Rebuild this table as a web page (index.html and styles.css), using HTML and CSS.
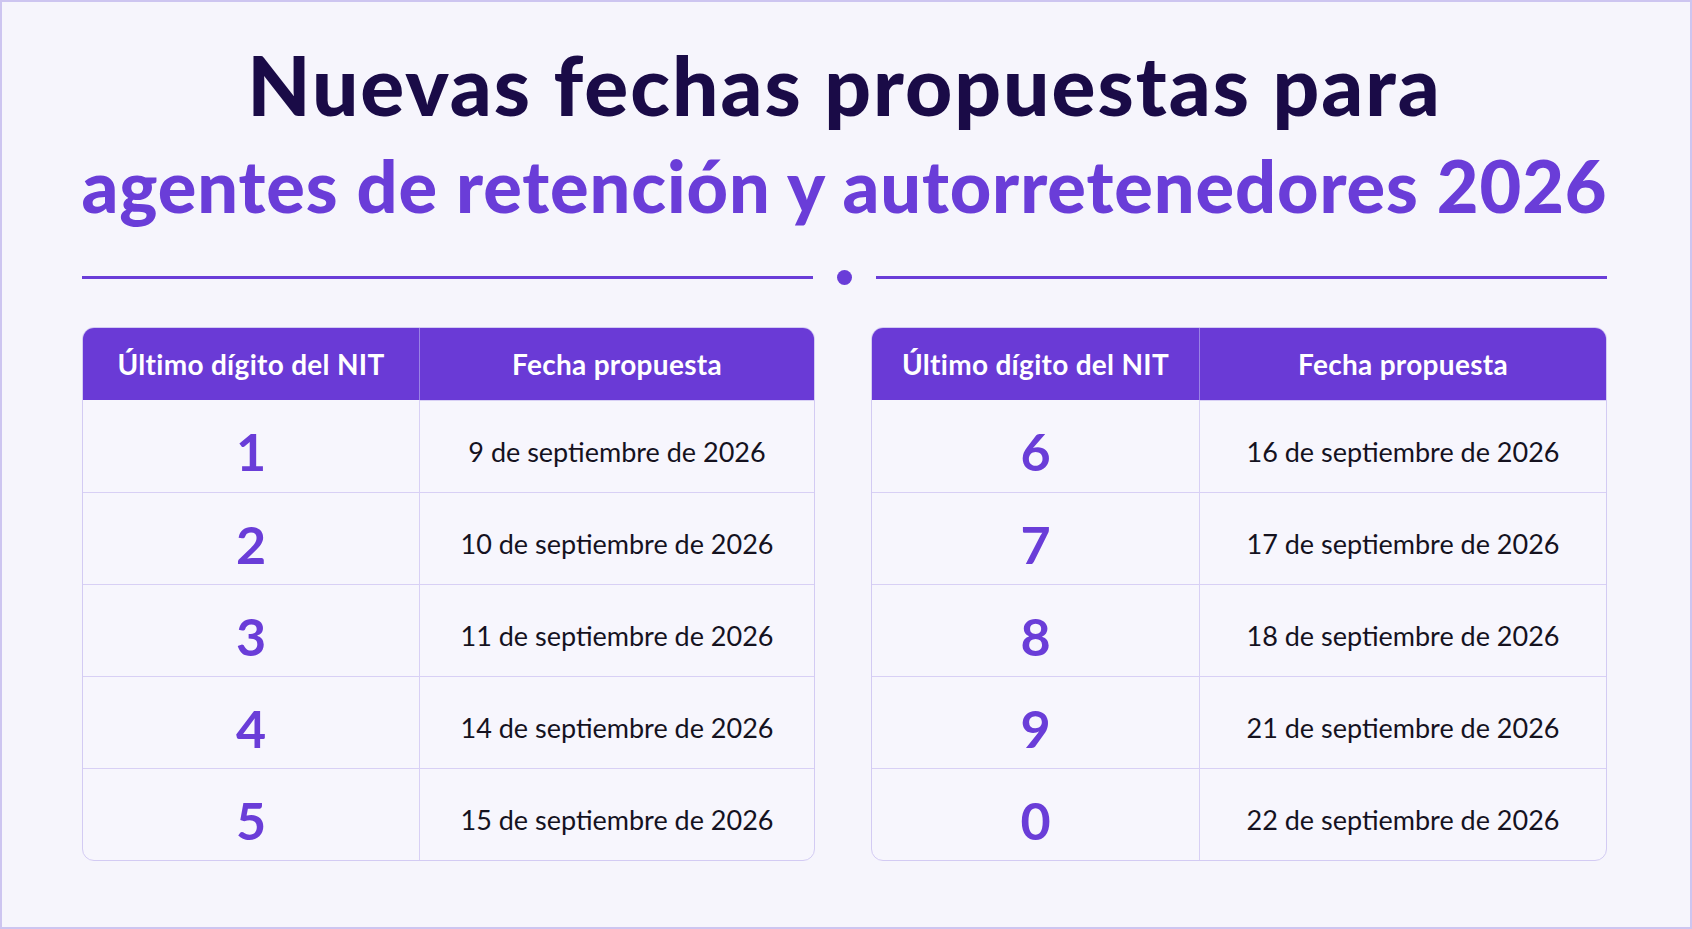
FILE: index.html
```html
<!DOCTYPE html>
<html lang="es">
<head>
<meta charset="utf-8">
<title>Nuevas fechas propuestas</title>
<link rel="stylesheet" href="styles.css">
</head>
<body>
<div class="page">
  <header class="title">
    <h1 class="title-main">Nuevas fechas propuestas para</h1>
    <h2 class="title-sub">agentes de retención y autorretenedores 2026</h2>
  </header>
  <div class="divider">
    <span class="divider-line"></span>
    <span class="divider-dot"></span>
    <span class="divider-line"></span>
  </div>
  <section class="tables">
    <div class="table table-left">
      <div class="th">Último dígito del NIT</div>
      <div class="th">Fecha propuesta</div>
      <div class="td digit">1</div><div class="td date">9 de septiembre de 2026</div>
      <div class="td digit">2</div><div class="td date">10 de septiembre de 2026</div>
      <div class="td digit">3</div><div class="td date">11 de septiembre de 2026</div>
      <div class="td digit">4</div><div class="td date">14 de septiembre de 2026</div>
      <div class="td digit">5</div><div class="td date">15 de septiembre de 2026</div>
    </div>
    <div class="table table-right">
      <div class="th">Último dígito del NIT</div>
      <div class="th">Fecha propuesta</div>
      <div class="td digit">6</div><div class="td date">16 de septiembre de 2026</div>
      <div class="td digit">7</div><div class="td date">17 de septiembre de 2026</div>
      <div class="td digit">8</div><div class="td date">18 de septiembre de 2026</div>
      <div class="td digit">9</div><div class="td date">21 de septiembre de 2026</div>
      <div class="td digit">0</div><div class="td date">22 de septiembre de 2026</div>
    </div>
  </section>
</div>
</body>
</html>
```
FILE: styles.css
```css
* { box-sizing: border-box; }
html, body { margin: 0; padding: 0; }
body {
  background: #f6f5fc;
  font-family: "Lato", "Liberation Sans", sans-serif;
}
.page {
  width: 1692px;
  height: 929px;
  border: 2px solid #cdc5f0;
  background: #f6f5fc;
  padding: 31px 83px 0 80px;
  display: flex;
  flex-direction: column;
}
.title {
  text-align: center;
  white-space: nowrap;
  margin: 0 -60px;
}
.title-main {
  margin: 0;
  font-size: 82px;
  line-height: 102px;
  font-weight: 900;
  color: #1a0b47;
  letter-spacing: 2px;
}
.title-sub {
  margin: 0;
  font-size: 72px;
  line-height: 100px;
  font-weight: 900;
  color: #6a3dd8;
  letter-spacing: 0.9px;
}
.divider {
  margin-top: 35px;
  height: 15px;
  display: flex;
  align-items: center;
  gap: 24px;
}
.divider-line {
  flex: 1;
  height: 2.5px;
  background: #6a3dd8;
}
.divider-dot {
  width: 15px;
  height: 15px;
  border-radius: 50%;
  background: #6a3dd8;
}
.tables {
  margin-top: 42px;
  display: grid;
  grid-template-columns: 733px 736px;
  gap: 56px;
}
.table {
  display: grid;
  grid-template-rows: 72px repeat(5, 92px);
  border: 1px solid #d3cbf3;
  border-radius: 12px;
  overflow: hidden;
  background: #f7f6fd;
}
.table-left { grid-template-columns: 336px 1fr; }
.table-right { grid-template-columns: 327px 1fr; }
.th {
  background: #6a3ad6;
  color: #ffffff;
  font-size: 28px;
  font-weight: 700;
  letter-spacing: 0.3px;
  display: flex;
  align-items: center;
  justify-content: center;
}
.th + .th { border-left: 1px solid #9a82e6; }
.td {
  display: flex;
  align-items: center;
  justify-content: center;
  padding-top: 10px;
  border-top: 1px solid #d8d0f5;
}
.th + .th + .td { border-top: none; }
.td.date { border-left: 1px solid #d8d0f5; font-size: 27px; color: #15121f; font-weight: 400; }
.td.digit { font-size: 52px; font-weight: 700; color: #6a3dd8; }
```
